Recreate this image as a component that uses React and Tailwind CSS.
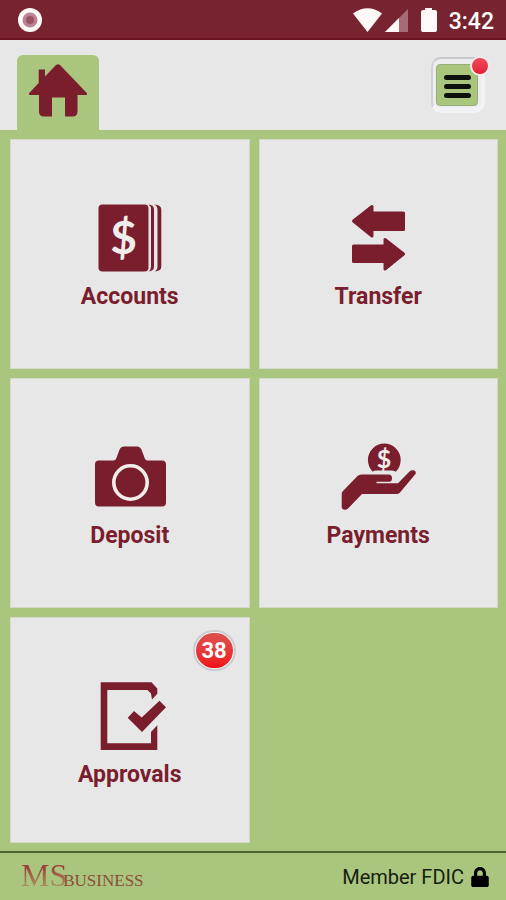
import { FaLock } from "react-icons/fa";

const AccountsIcon = () => (
  <svg width="80" height="70" viewBox="0 0 80 70" fill="currentColor" aria-hidden="true">
    <rect x="8.5" y="1.5" width="50" height="67" rx="4" />
    <path d="M58.5 1.5q5.5 0.5 5.5 5v57q0 4.5-5.5 5q2.5-1.500 2.500-5v-57q0-3.500-2.500-5z" />
    <path d="M64.500 1.500q6.800 0.500 6.800 5v57q0 4.500-6.800 5q3-1.500 3-5v-57q0-3.500-3-5z" />
    <text
      x="33.5"
      y="51"
      textAnchor="middle"
      fill="#efedea"
      className="font-[Lato,sans-serif] text-[46px] font-bold"
    >
      $
    </text>
  </svg>
);

const TransferIcon = () => (
  <svg
    width="80"
    height="70"
    viewBox="0 0 80 70"
    fill="currentColor"
    stroke="currentColor"
    strokeWidth="3"
    strokeLinejoin="round"
    aria-hidden="true"
  >
    <path d="M15.500 18L34 3.500V10H65.500V26.500H34V33z" />
    <path d="M65.500 51L47 36.500V43H15.500V58.500H47V66z" />
  </svg>
);

const DepositIcon = () => (
  <svg width="80" height="70" viewBox="0 0 80 70" fill="currentColor" aria-hidden="true">
    <path d="M9 18.500h14.500q2 0 2.700-2l3-8q1.300-4 5-4h12.600q3.700 0 5 4l3 8q.7 2 2.700 2H72q4 0 4 4v38q0 4-4 4H9q-4 0-4-4v-38q0-4 4-4z" />
    <circle cx="40.500" cy="40.500" r="16.700" fill="none" stroke="#f1eeea" strokeWidth="3.600" />
  </svg>
);

const PaymentsIcon = () => (
  <svg width="80" height="70" viewBox="0 0 80 70" fill="currentColor" aria-hidden="true">
    <path d="M34.800 29.700a16.400 16.400 0 1 1 23 0q-1.500-1.200-5-1.200H38q-2 0-3.200 1.200z" />
    <text
      x="46"
      y="26"
      textAnchor="middle"
      fill="#efedea"
      className="font-[Lato,sans-serif] text-[25px] font-bold"
    >
      $
    </text>
    <path d="M4.500 49.500L19.500 34q1.500-1.500 4-1.500H50.500q3.500 0 3.500 3.700q0 3.500-3 3.500H38.500v1.500H60L71.500 29.500q1.500-1.500 4-1.200q2.800.7 2.200 3.500L62 50.500q-1.500 1.500-3.500 1.500H24L10 66.500q-1.500 1.500-3.500 1.300q-2.800-.3-2.800-3V52q0-1.500.8-2.500z" />
  </svg>
);

const ApprovalsIcon = () => (
  <svg width="80" height="70" viewBox="0 0 80 70" fill="currentColor" aria-hidden="true">
    <path d="M10.700 1.300H61.500L67.300 7.500V12.800L62 18.500L61 12.500L57.500 9H17.300V62.300H61V51L67.300 44.300V69H10.700z" />
    <path d="M37.700 36.700L44 30L51.700 36.600L69.500 19.800L76 26.300L52 51z" />
  </svg>
);

const HomeIcon = () => (
  <svg width="60" height="54" viewBox="0 0 60 54" fill="currentColor" aria-hidden="true">
    <path d="M28 2q2-1.500 4 0L59 30.300q.5 1.500-1 1.700H49.500V48.500q0 5-5 5H37V34.500H24V53.500H16q-5 0-5-5V32H2q-1.500-.2-1-1.700L10.700 20V6.500H17v7z" />
  </svg>
);

const tiles = [
  { name: "Accounts", Icon: AccountsIcon },
  { name: "Transfer", Icon: TransferIcon },
  { name: "Deposit", Icon: DepositIcon },
  { name: "Payments", Icon: PaymentsIcon },
  { name: "Approvals", Icon: ApprovalsIcon, badge: 38 },
];

const StatusBar = () => (
  <div className="flex h-10 items-center justify-between border-b-2 border-[#6b1424] bg-[#782430] pt-0.5 pl-[18px] pr-3 text-white">
    <svg width="24" height="24" viewBox="0 0 24 24" aria-hidden="true">
      <circle cx="12" cy="12" r="12" fill="#fffaf8" />
      <circle cx="12" cy="12" r="7.500" fill="#b98590" />
      <circle cx="12" cy="12" r="4" fill="#9b5362" />
    </svg>

    <div className="flex items-center">
      <svg width="86" height="26" viewBox="0 0 86 26" fill="#fffaf8" aria-hidden="true">
        <path d="M0 6.500Q14.500-4 29 6.500L14.500 25z" />
        <path d="M55 2v23H32z" fill="#a76b77" />
        <path d="M46 11v14H32z" />
        <path d="M72 1h7v2h3q2 0 2 2v18q0 2-2 2H70q-2 0-2-2V5q0-2 2-2h2z" />
      </svg>
      <span className="mt-1 ml-[10px] text-[23px] leading-6 font-medium">3:42</span>
    </div>
  </div>
);

const Header = () => (
  <header className="flex h-[90px] items-end justify-between bg-[#e7e7e7] pl-[17px] pr-[21px]">
    <button
      aria-label="Home"
      className="flex h-[75px] w-[82px] justify-center rounded-t-md bg-[#a9c57e] pt-2 text-[#7a1e2e]"
    >
      <HomeIcon />
    </button>

    <button
      aria-label="Menu"
      className="relative mb-[17px] flex h-14 w-[54px] items-center justify-center rounded-[10px] border-t-2 border-r-4 border-b-[6px] border-l-2 border-t-[#c9c9cb] border-r-[#f3f3f5] border-b-[#f3f3f6] border-l-[#d2d2d4] bg-[#ededef]"
    >
      <span className="mt-1 flex h-[42px] w-[42px] flex-col items-center justify-center gap-1 rounded-sm border border-[#98ac78] bg-[#a9c57e] pt-0.5">
        <span className="h-[5px] w-[27px] rounded-full bg-[#0d120c]" />
        <span className="h-[5px] w-[27px] rounded-full bg-[#0d120c]" />
        <span className="h-[5px] w-[27px] rounded-full bg-[#0d120c]" />
      </span>
      <span className="absolute -top-[3px] -right-[9px] h-5 w-5 rounded-full border-2 border-[#f6e9eb] bg-linear-to-b from-[#ef4a5c] to-[#e01c34]" />
    </button>
  </header>
);

const Tile = ({ name, Icon, badge }) => (
  <button className="relative flex flex-col items-center border border-[#d3dac8] bg-[#e7e7e7] pt-[63px] text-[#7a1e2e]">
    <Icon />
    <span className="mt-2 text-[23px] leading-8 font-bold">{name}</span>
    {badge && (
      <span className="absolute top-3 right-[13px] flex h-[41px] w-[43px] items-center justify-center rounded-full border-2 border-[#c9cdd0] bg-[#f6f3f3] p-px">
        <span className="flex h-full w-full items-center justify-center rounded-full bg-linear-to-b from-[#dc5050] to-[#ee0c14] text-[22px] font-bold text-white">
          {badge}
        </span>
      </span>
    )}
  </button>
);

const Footer = () => (
  <footer className="flex h-[49px] items-center justify-between border-t-2 border-[#4b6630] pr-4 pl-[21px]">
    <div className="flex items-baseline pt-0.5 font-['Liberation_Serif',serif] leading-10">
      <span className="bg-linear-to-b from-[#9c3f38] from-30% to-[#a3a468] to-90% bg-clip-text text-[32px] text-transparent">
        MS
      </span>
      <span className="-ml-1 text-[17px] text-[#8b5038]">BUSINESS</span>
    </div>

    <div className="flex items-center gap-1.5 text-[#17200f]">
      <span className="text-[20px] leading-6">Member FDIC</span>
      <FaLock size={20} className="text-black" />
    </div>
  </footer>
);

const App = () => {
  return (
    <div className="flex min-h-screen flex-col bg-[#a9c57e] font-[Roboto,sans-serif]">
      <StatusBar />
      <Header />
      <main className="grid flex-1 grid-cols-2 grid-rows-[230px_230px_1fr] gap-[9px] pt-[9px] pr-2 pb-2 pl-[10px]">
        {tiles.map((tile) => (
          <Tile key={tile.name} {...tile} />
        ))}
      </main>
      <Footer />
    </div>
  );
};

export default App;
